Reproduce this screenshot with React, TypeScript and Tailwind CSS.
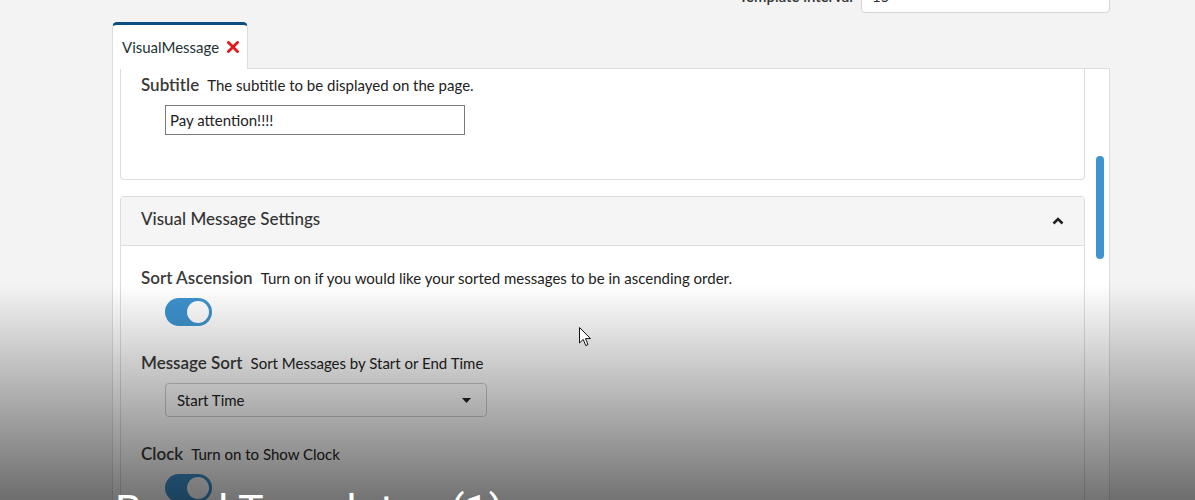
import React from "react";

function Toggle() {
  return (
    <div className="ml-[24px] mt-[10px] flex h-[28px] w-[47px] items-center justify-end rounded-full bg-[#3d93cf] pr-[3px]">
      <div className="h-[22px] w-[22px] rounded-full bg-white" />
    </div>
  );
}

function FieldLabel({ label, desc }: { label: string; desc: string }) {
  return (
    <div className="flex items-baseline gap-[8px] leading-[20px]">
      <span className="text-[17px] font-semibold text-[#3a3a3a]">{label}</span>
      <span className="text-[15px] text-[#222]">{desc}</span>
    </div>
  );
}

export default function App() {
  return (
    <div className="relative h-[500px] w-[1195px] overflow-hidden bg-[#f3f3f3] font-['Lato','Liberation_Sans',sans-serif]">
      {/* top row */}
      <div className="mt-[-21px] flex items-center justify-end gap-[8px] pr-[85px]">
        <span className="text-[15px] font-semibold text-[#333]">Template interval</span>
        <div className="flex h-[34px] w-[249px] items-center rounded-[4px] border border-[#d4d4d4] bg-white px-[10px] text-[15px] text-[#333]">
          15
        </div>
      </div>

      {/* tab */}
      <div className="mt-[9px] pl-[112px]">
        <div className="relative z-10 -mb-px flex h-[47px] w-[136px] items-center gap-[8px] rounded-t-[5px] border-x border-t-[3px] border-x-[#ddd] border-t-[#0b4f82] bg-white pl-[9px]">
          <span className="text-[15px] text-[#233]">VisualMessage</span>
          <svg width="12" height="12" viewBox="0 0 12 12">
            <path d="M1.5 1.5 L10.5 10.5 M10.5 1.5 L1.5 10.5" stroke="#e3171c" strokeWidth="2.8" strokeLinecap="square" />
          </svg>
        </div>
      </div>

      {/* panel */}
      <div className="ml-[112px] flex h-[460px] w-[998px] border border-[#ddd] bg-white">
        <div className="flex flex-1 flex-col pl-[7px]">
          {/* card 1 */}
          <div className="rounded-b-[4px] border-x border-b border-[#ddd] px-[20px] pt-[6px] pb-[44px]">
            <FieldLabel label="Subtitle" desc="The subtitle to be displayed on the page." />
            <div className="ml-[24px] mt-[10px] flex h-[30px] w-[300px] items-center border border-[#7a7a7a] px-[4px] text-[15px] text-[#222]">
              Pay attention!!!!
            </div>
          </div>

          {/* card 2 */}
          <div className="mt-[16px] flex-1 rounded-t-[4px] border-x border-t border-[#ddd]">
            <div className="flex h-[49px] items-center justify-between border-b border-[#ddd] bg-[#f5f5f5] pb-[4px] pl-[20px] pr-[20px]">
              <span className="text-[17px] font-medium text-[#333]">Visual Message Settings</span>
              <svg width="12" height="8" viewBox="0 0 12 8" className="mt-[4px]">
                <path d="M1.5 6.5 L6 2 L10.5 6.5" stroke="#222" strokeWidth="2.6" fill="none" />
              </svg>
            </div>
            <div className="px-[20px] pt-[22px]">
              <FieldLabel label="Sort Ascension" desc="Turn on if you would like your sorted messages to be in ascending order." />
              <Toggle />
              <div className="mt-[27px]">
                <FieldLabel label="Message Sort" desc="Sort Messages by Start or End Time" />
              </div>
              <div className="ml-[24px] mt-[10px] flex h-[34px] w-[322px] items-center justify-between rounded-[4px] border border-[#ccc] bg-white pl-[11px] pr-[15px] text-[15px] text-[#222]">
                <span>Start Time</span>
                <svg width="9" height="5" viewBox="0 0 9 5">
                  <path d="M0 0 L9 0 L4.5 5 Z" fill="#222" />
                </svg>
              </div>
              <div className="mt-[27px]">
                <FieldLabel label="Clock" desc="Turn on to Show Clock" />
              </div>
              <Toggle />
            </div>
          </div>
        </div>

        {/* scrollbar */}
        <div className="w-[24px] pt-[87px] pl-[11px]">
          <div className="h-[103px] w-[8px] rounded-full bg-[#3d94cf]" />
        </div>
      </div>

      {/* dark gradient overlay */}
      <div className="pointer-events-none absolute left-0 right-0 top-[285px] h-[215px] bg-linear-to-b from-black/0 to-black/55" />

      {/* overlay title */}
      <div className="pointer-events-none absolute left-[115px] top-[489px] whitespace-nowrap font-['Roboto',sans-serif] text-[43px] leading-none text-white">
        Board Templates (1)
      </div>

      {/* mouse cursor */}
      <svg className="pointer-events-none absolute left-[579px] top-[327px]" width="14" height="21" viewBox="0 0 14 21">
        <path d="M0.5 0.5 L0.5 16 L4.2 12.4 L6.8 18.6 L9 17.6 L6.5 11.6 L11.5 11.6 Z" fill="#fff" stroke="#111" strokeWidth="1" strokeLinejoin="round" />
      </svg>
    </div>
  );
}
